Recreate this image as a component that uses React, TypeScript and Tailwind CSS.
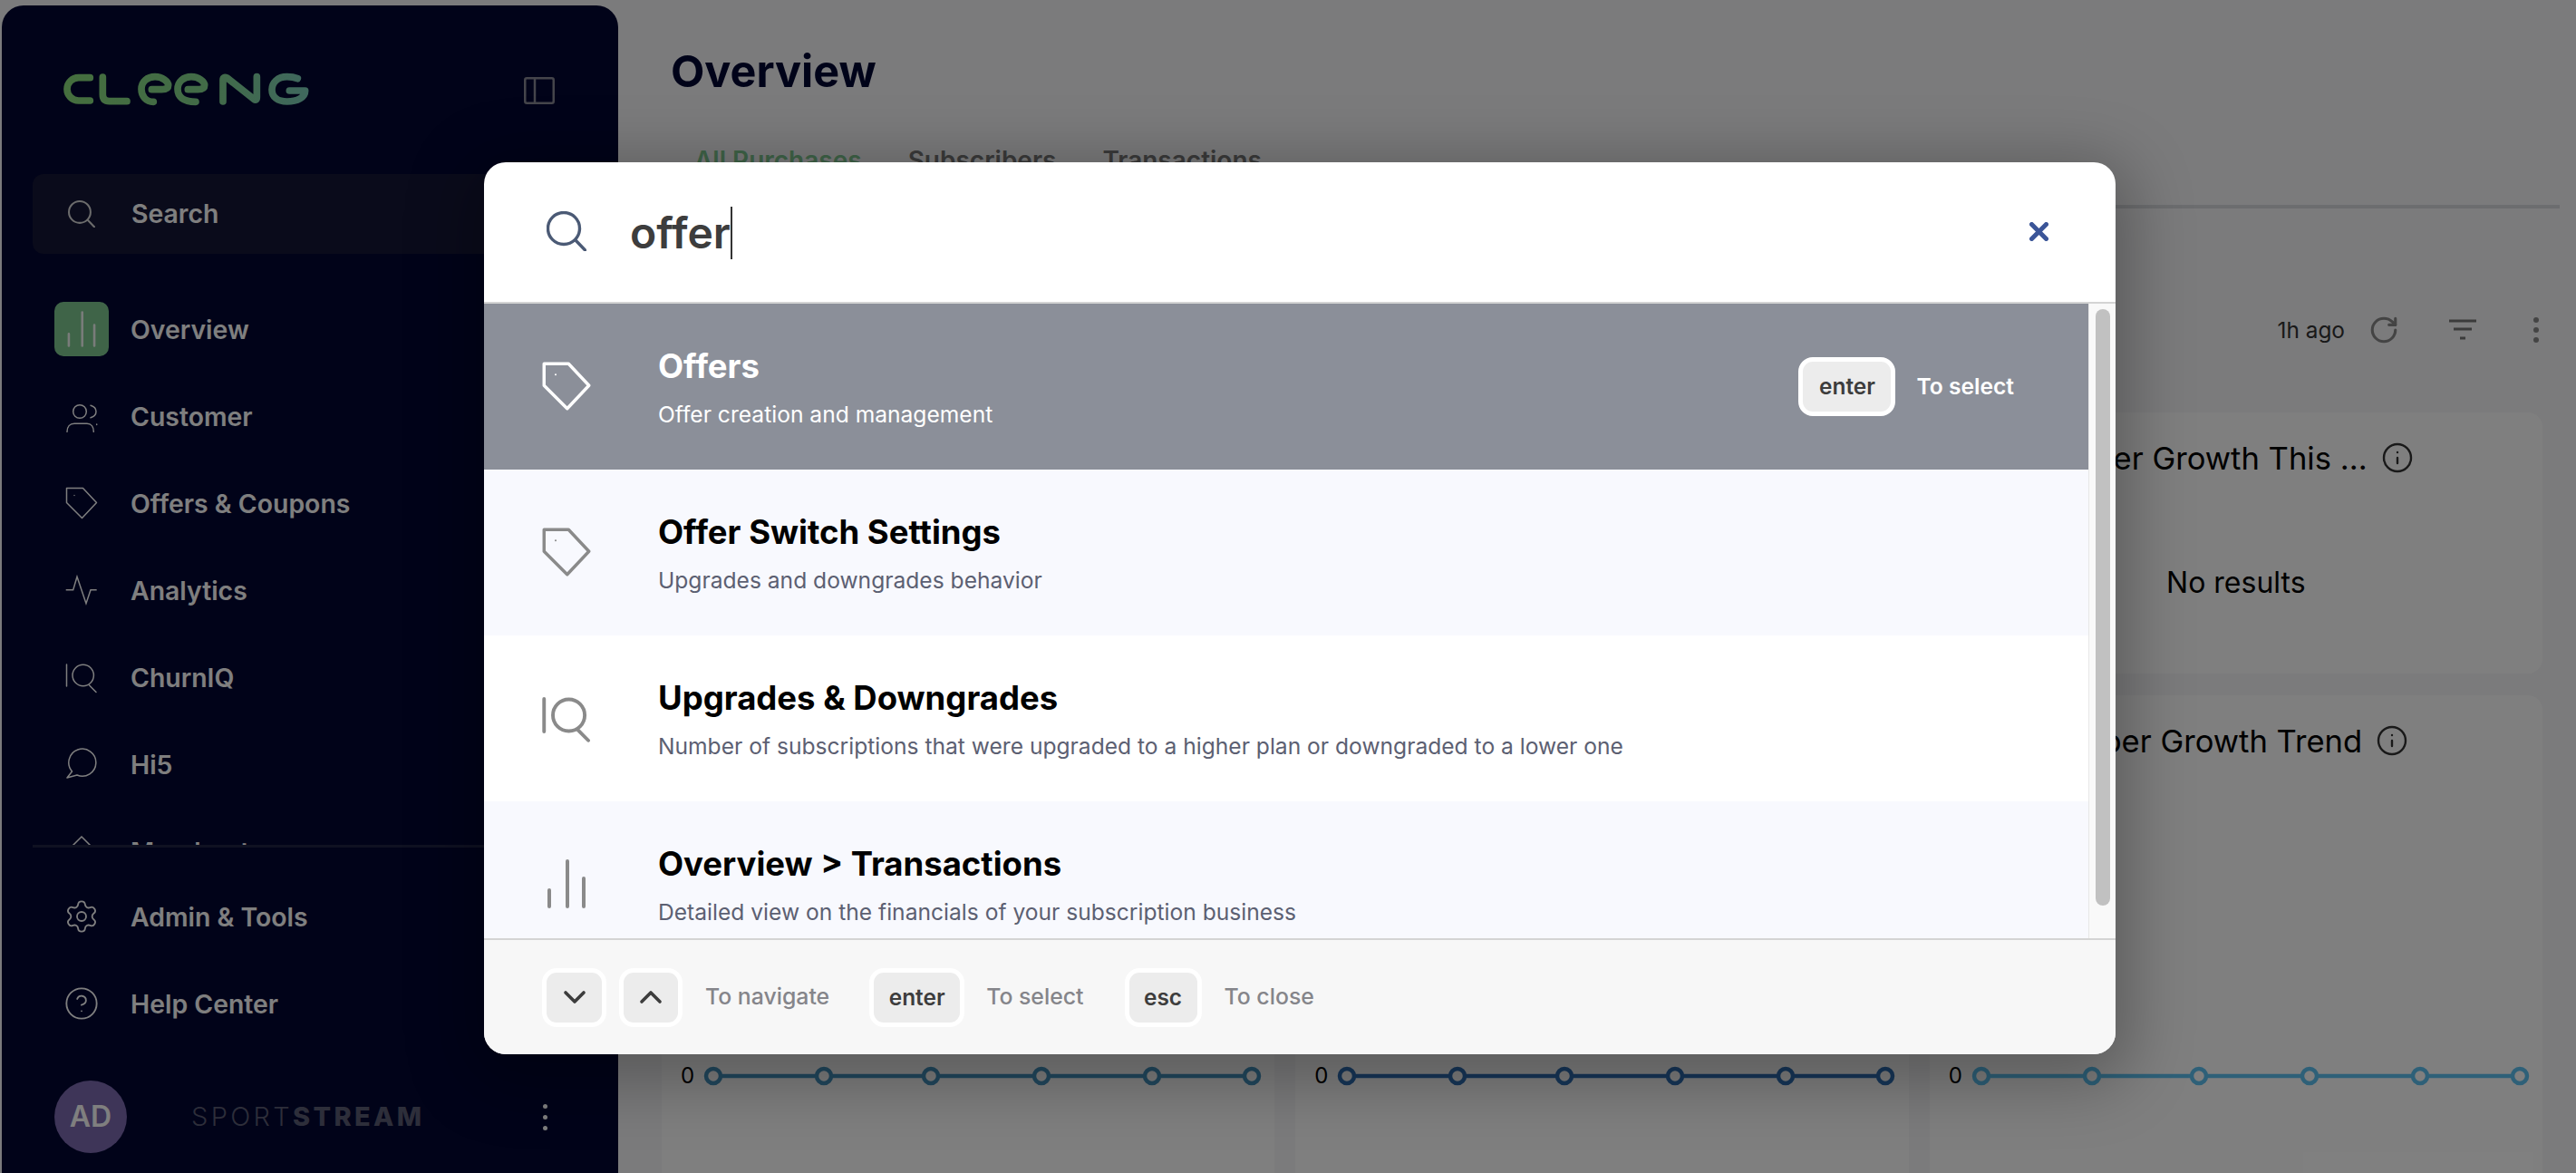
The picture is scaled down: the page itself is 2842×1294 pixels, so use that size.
import React from "react";
import { Settings, CircleHelp, RotateCw, Info, ChevronDown, ChevronUp } from "lucide-react";

type IconProps = { size?: number; sw?: number; className?: string };

const TagIcon = ({ size = 36, sw = 1.5, className = "" }: IconProps) => (
  <svg width={size} height={size} viewBox="0 0 36 36" fill="none" stroke="currentColor" strokeWidth={sw} strokeLinejoin="round" className={className}>
    <path d="M1.5 1.5H19.5L34.5 17.5L18.5 34.5L1.5 17.5Z" />
    <circle cx="10" cy="9.5" r="0.7" fill="currentColor" stroke="none" />
  </svg>
);
const IqIcon = ({ size = 36, sw = 1.5, className = "" }: IconProps) => (
  <svg width={size} height={size} viewBox="0 0 36 36" fill="none" stroke="currentColor" strokeWidth={sw} strokeLinecap="round" className={className}>
    <path d="M1.5 4V28" />
    <circle cx="19.7" cy="16" r="11.7" />
    <path d="M26.3 26.7L34 34.5" />
  </svg>
);
const BarsIcon = ({ size = 54, sw = 4, className = "" }: IconProps) => (
  <svg width={size} height={size} viewBox="0 0 54 54" fill="none" stroke="currentColor" strokeWidth={sw} strokeLinecap="round" className={className}>
    <path d="M8 34V52M28 2V52M46 21V52" />
  </svg>
);
const CustomerIcon = () => (
  <svg width="36" height="36" viewBox="0 0 36 36" fill="none" stroke="currentColor" strokeWidth="1.5" strokeLinecap="round">
    <circle cx="16" cy="13" r="7.3" />
    <path d="M28 6.3C32 7.5 34 10 34 13C34 16 32 18.5 28 19.7" />
    <path d="M2 35.3C2 30 5 26.3 10 26.3H24C28.5 26.3 31.3 30 31.3 35.3" />
    <path d="M34.7 27V27.4" />
  </svg>
);
const AnalyticsIcon = () => (
  <svg width="36" height="36" viewBox="0 0 36 36" fill="none" stroke="currentColor" strokeWidth="1.5">
    <path d="M0.7 17.7H8.7L13 3.3L23 32.7L28 17.7H34.7" />
  </svg>
);
const ChatIcon = () => (
  <svg width="36" height="36" viewBox="0 0 36 36" fill="none" stroke="currentColor" strokeWidth="1.5" strokeLinejoin="round">
    <path d="M7.5 26A15 15 0 1 1 13 30L2 33Z" />
  </svg>
);
const DiamondIcon = () => (
  <svg width="36" height="36" viewBox="0 0 36 36" fill="none" stroke="currentColor" strokeWidth="1.5">
    <path d="M18 2L34 18L18 34L2 18Z" />
  </svg>
);
const SearchGlyph = ({ size = 44, sw = 3.4, className = "" }: IconProps) => (
  <svg width={size} height={size} viewBox="0 0 44 44" fill="none" stroke="currentColor" strokeWidth={sw} strokeLinecap="round" className={className}>
    <circle cx="19" cy="19" r="17.5" />
    <path d="M32 32L42.5 43" />
  </svg>
);

const Logo = () => (
  <svg width="300" height="60" viewBox="0 0 900 180" fill="none" stroke="url(#cleeng)" strokeWidth="23" strokeLinecap="round" strokeLinejoin="round">
    <defs>
      <linearGradient id="cleeng" gradientUnits="userSpaceOnUse" x1="30" y1="0" x2="840" y2="0">
        <stop offset="0" stopColor="#8ade7c" />
        <stop offset="0.6" stopColor="#84d690" />
        <stop offset="1" stopColor="#7ed0bc" />
      </linearGradient>
    </defs>
    <path d="M118 47H80A38 38 0 0 0 80 123H118" />
    <path d="M160 45V103Q160 125 182 125H240" />
    <path d="M328 127C303 127 288 108 288 85C288 60 308 44 333 44C358 44 377 60 377 72C377 82 368 86 355 86H322" />
    <path d="M468 127C424 127 408 108 408 85C408 60 428 44 453 44C478 44 497 60 497 72C497 82 488 86 475 86H442" />
    <path d="M558 126V55Q558 42 572 48L660 118Q670 125 670 112V44" />
    <path d="M805 50C790 44 780 44 770 44C738 44 720 64 720 87C720 110 738 126 770 126C805 126 830 112 830 90H778" />
  </svg>
);

const NavRow = ({ icon, label }: { icon: React.ReactNode; label: string }) => (
  <div className="flex h-[96px] items-center gap-[25px] pl-[58px] text-[28.4px] font-semibold leading-[36px] text-white">
    <div className="flex w-[60px] shrink-0 justify-center">{icon}</div>
    <span className="ml-[-1px] pt-[2px]">{label}</span>
  </div>
);

const Sidebar = () => (
  <aside className="ml-[2px] mt-[6px] flex h-[1288px] w-[680px] shrink-0 flex-col rounded-t-[24px] bg-[#020632]">
    <div className="mb-[2px] flex h-[184px] items-center justify-between pl-[58px] pr-[70px] pt-[4px]">
      <Logo />
      <svg width="34" height="30" viewBox="0 0 34 30" fill="none" stroke="#8a8a96" strokeWidth="2.5">
        <rect x="1.25" y="1.25" width="31.5" height="27.5" rx="2" />
        <path d="M12 1.25V28.75" />
      </svg>
    </div>
    <div className="mx-[34px] flex h-[88px] w-[610px] items-center gap-[40px] rounded-[12px] bg-[#141636] pl-[39px] text-[28.4px] font-semibold text-white">
      <SearchGlyph size={30} sw={3} className="text-[#d8d8d8]" />
      <span>Search</span>
    </div>
    <div className="mt-[35px] h-[617px] shrink-0 overflow-hidden">
      <div className="flex h-[96px] items-center gap-[25px] pl-[58px] text-[28.4px] font-semibold leading-[36px] text-white">
        <div className="flex h-[60px] w-[60px] shrink-0 items-center justify-center rounded-[10px] bg-[#7fc991] text-[#ffffff]">
          <BarsIcon size={40} sw={3.5} className="opacity-90" />
        </div>
        <span className="ml-[-1px] pt-[2px]">Overview</span>
      </div>
      <div className="text-[#d8d8d8]">
        <NavRow icon={<CustomerIcon />} label="Customer" />
        <NavRow icon={<TagIcon />} label="Offers & Coupons" />
        <NavRow icon={<AnalyticsIcon />} label="Analytics" />
        <NavRow icon={<IqIcon />} label="ChurnIQ" />
        <NavRow icon={<ChatIcon />} label="Hi5" />
        <NavRow icon={<DiamondIcon />} label="Merchant" />
      </div>
    </div>
    <div className="mx-[34px] h-[3px] w-[610px] shrink-0 bg-[#1f2244]" />
    <div className="mt-[28px] text-[#d8d8d8]">
      <NavRow icon={<Settings size={40} strokeWidth={1.1} />} label="Admin & Tools" />
      <NavRow icon={<CircleHelp size={40} strokeWidth={1.1} />} label="Help Center" />
    </div>
    <div className="ml-[58px] mt-[37px] flex items-center">
      <div className="flex h-[80px] w-[80px] items-center justify-center rounded-full bg-[#7c6ab0] text-[32px] font-semibold text-white">AD</div>
      <div className="ml-[71px] text-[29px] tracking-[0.115em] text-[#5a5c74]">
        <span className="font-light">SPORT</span>
        <span className="font-extrabold">STREAM</span>
      </div>
      <div className="ml-[131px] flex flex-col gap-[7px]">
        <span className="h-[5px] w-[5px] rounded-full bg-white" />
        <span className="h-[5px] w-[5px] rounded-full bg-white" />
        <span className="h-[5px] w-[5px] rounded-full bg-white" />
      </div>
    </div>
  </aside>
);

const CHART_X = [17, 139, 257, 379, 501, 611];

const ChartLine = ({ color }: { color: string }) => (
  <div className="flex items-center pl-[21px]">
    <span className="w-[19px] text-[24px] leading-[30px] text-black">0</span>
    <svg width="630" height="24" viewBox="0 0 630 24" fill="none">
      <path d={`M${CHART_X[0]} 12H${CHART_X[5]}`} stroke={color} strokeWidth="4.5" />
      {CHART_X.map((x) => (
        <circle key={x} cx={x} cy="12" r="8" fill="white" stroke={color} strokeWidth="4.5" />
      ))}
    </svg>
  </div>
);

const CardTitle = ({ title, pad }: { title: string; pad: number }) => (
  <div className="flex items-center gap-[15px] pt-[30px] text-[34.6px] leading-[40px] text-black" style={{ paddingLeft: pad }}>
    <span>{title}</span>
    <Info size={36} strokeWidth={1.6} className="text-[#333333]" />
  </div>
);

const Main = () => (
  <main className="flex-1 pl-[48px]">
    <h1 className="ml-[10px] pt-[51px] text-[48.5px] font-bold leading-[56px] text-[#000632]">Overview</h1>
    <div className="ml-[36px] mt-[52px] flex gap-[51px] text-[28px] font-semibold leading-[36px]">
      <span className="text-[#7fc991]">All Purchases</span>
      <span className="text-[#777777]">Subscribers</span>
      <span className="text-[#777777]">Transactions</span>
    </div>
    <div className="ml-[8px] mr-[18px] mt-[31px] h-[4px] bg-[#d8dadf]" />
    <div className="mr-[41px] mt-[114px] flex h-[40px] items-center justify-end text-[24.4px] text-[#333333]">
      <span>1h ago</span>
      <RotateCw size={34} strokeWidth={2.2} className="ml-[26px] text-[#888888]" />
      <svg width="30" height="24" viewBox="0 0 30 24" fill="none" stroke="#777777" strokeWidth="3" className="ml-[55px]">
        <path d="M0 2H30M5 11H25M12 21H18" />
      </svg>
      <div className="ml-[63px] flex flex-col gap-[5px]">
        <span className="h-[6px] w-[6px] rounded-full bg-[#888888]" />
        <span className="h-[6px] w-[6px] rounded-full bg-[#888888]" />
        <span className="h-[6px] w-[6px] rounded-full bg-[#888888]" />
      </div>
    </div>
    <div className="mt-[71px] grid w-[2075px] grid-cols-3 gap-x-[23px] gap-y-[24px]">
      <div className="h-[288px] rounded-[16px] bg-white" />
      <div className="h-[288px] rounded-[16px] bg-white" />
      <div className="h-[288px] rounded-[16px] bg-white">
        <CardTitle title="Subscriber Growth This ..." pad={58} />
        <p className="mt-[98px] text-center text-[32px] leading-[40px] text-black">No results</p>
      </div>
      <div className="h-[560px] rounded-[16px] bg-white pt-[405px]">
        <ChartLine color="#4492be" />
      </div>
      <div className="h-[560px] rounded-[16px] bg-white pt-[405px]">
        <ChartLine color="#2e6eb4" />
      </div>
      <div className="h-[560px] rounded-[16px] bg-white">
        <CardTitle title="Subscriber Growth Trend" pad={67} />
        <div className="pt-[335px]">
          <ChartLine color="#5cc0f0" />
        </div>
      </div>
    </div>
  </main>
);

const ResultRow = ({
  icon,
  title,
  desc,
  bg,
  active = false,
  h = 183,
}: {
  icon: React.ReactNode;
  title: string;
  desc: string;
  bg: string;
  active?: boolean;
  h?: number;
}) => (
  <div className={`flex shrink-0 pl-[64px] ${bg}`} style={{ height: h }}>
    <div className={`mt-[64px] h-[54px] w-[54px] shrink-0 ${active ? "text-white" : "text-[#8a8a8a]"}`}>{icon}</div>
    <div className="ml-[74px] flex-1 pt-[47px]">
      <div className={`text-[36.5px] font-bold leading-[44px] ${active ? "text-white" : "text-black"}`}>{title}</div>
      <div className={`mt-[11px] text-[24.6px] leading-[40px] ${active ? "text-white" : "text-[#5c6072]"}`}>{desc}</div>
    </div>
    {active && (
      <div className="flex items-center gap-[23px] pr-[82px] text-[24.6px] font-semibold">
        <Key w={107}>enter</Key>
        <span className="text-white">To select</span>
      </div>
    )}
  </div>
);

const Key = ({ w, children }: { w: number; children: React.ReactNode }) => (
  <div
    className="flex h-[65px] shrink-0 items-center justify-center rounded-[16px] border-[5px] border-white bg-[#ececec] text-[24.4px] font-semibold text-[#3d3d3d]"
    style={{ width: w }}
  >
    {children}
  </div>
);

const Modal = () => (
  <div className="absolute left-[534px] top-[179px] flex h-[984px] w-[1800px] flex-col overflow-hidden rounded-[24px] bg-white shadow-[0_16px_70px_16px_rgba(0,0,0,0.28)]">
    <div className="flex h-[156px] shrink-0 items-center border-b-[2px] border-[#d4d4d4] pl-[69px] pr-[74px]">
      <SearchGlyph className="mt-[-2px] text-[#4b5a75]" />
      <div className="ml-[48px] flex flex-1 items-center pt-[2px] text-[48px] font-semibold leading-[58px] text-[#3d3d3d]">
        <span>offer</span>
        <span className="h-[58px] w-[2px] bg-[#333333]" />
      </div>
      <svg width="21" height="21" viewBox="0 0 21 21" fill="none" stroke="#3b5598" strokeWidth="5" strokeLinecap="round" className="mt-[-2px]">
        <path d="M2.5 2.5L18.5 18.5M18.5 2.5L2.5 18.5" />
      </svg>
    </div>
    <div className="relative flex h-[700px] shrink-0">
      <div className="flex flex-1 flex-col overflow-hidden">
        <ResultRow active bg="bg-[#8b8f99]" icon={<TagIcon size={54} sw={2.3} />} title="Offers" desc="Offer creation and management" />
        <ResultRow bg="bg-[#f8f9fe]" icon={<TagIcon size={54} sw={2.3} />} title="Offer Switch Settings" desc="Upgrades and downgrades behavior" />
        <ResultRow bg="bg-white" icon={<IqIcon size={54} sw={2.6} />} title="Upgrades & Downgrades" desc="Number of subscriptions that were upgraded to a higher plan or downgraded to a lower one" />
        <ResultRow h={152} bg="bg-[#f8f9fe]" icon={<BarsIcon />} title="Overview > Transactions" desc="Detailed view on the financials of your subscription business" />
      </div>
      <div className="w-[30px] shrink-0 border-l-[1px] border-[#e8e8e8] bg-[#f9f9f9] pl-[7px] pt-[6px]">
        <div className="h-[658px] w-[16px] rounded-full bg-[#c1c1c1]" />
      </div>
    </div>
    <div className="flex flex-1 items-center border-t-[2px] border-[#d4d4d4] bg-[#f7f7f7] pl-[64px] text-[24.8px] font-medium text-[#85858a]">
      <Key w={71}>
        <ChevronDown size={40} strokeWidth={2.2} className="text-[#3d3d3d]" />
      </Key>
      <div className="ml-[14px]">
        <Key w={70}>
          <ChevronUp size={40} strokeWidth={2.2} className="text-[#3d3d3d]" />
        </Key>
      </div>
      <span className="ml-[25px]">To navigate</span>
      <div className="ml-[44px]">
        <Key w={105}>enter</Key>
      </div>
      <span className="ml-[24px]">To select</span>
      <div className="ml-[45px]">
        <Key w={85}>esc</Key>
      </div>
      <span className="ml-[25px]">To close</span>
    </div>
  </div>
);

export default function App() {
  return (
    <div className="relative flex h-[1294px] w-[2842px] overflow-hidden bg-[#f6f6f8] font-['Inter',sans-serif]">
      <Sidebar />
      <Main />
      <div className="absolute inset-0 bg-black/50" />
      <Modal />
    </div>
  );
}
